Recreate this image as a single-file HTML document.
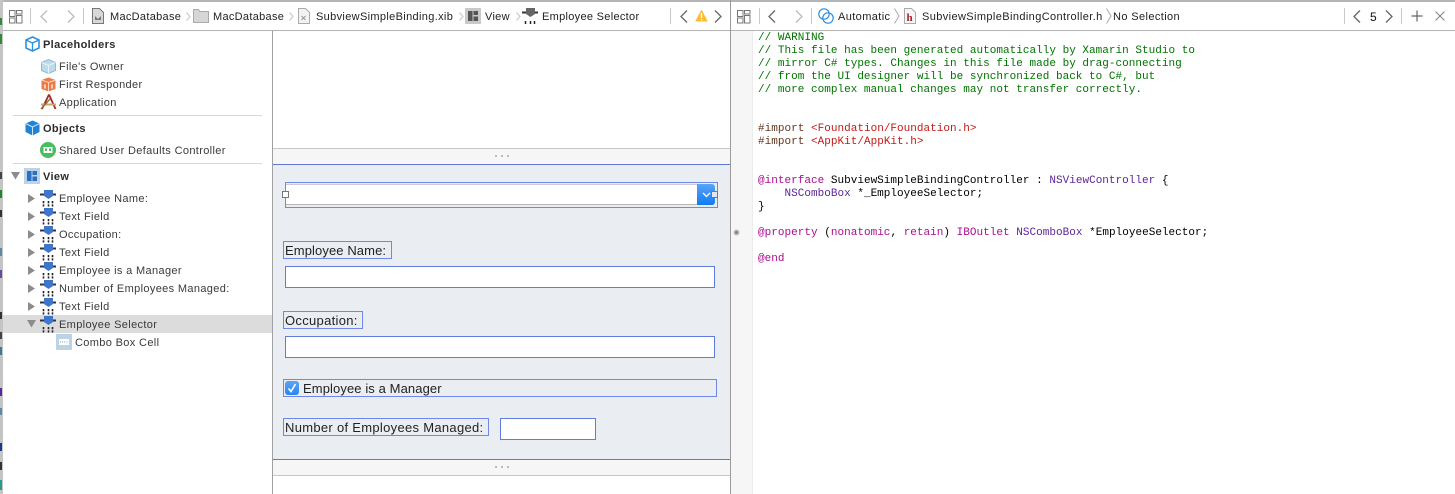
<!DOCTYPE html>
<html><head><meta charset="utf-8">
<style>
html,body{margin:0;padding:0;background:#fff}
#r{position:relative;width:1455px;height:494px;overflow:hidden;background:#fff;font-family:"Liberation Sans",sans-serif;font-size:11px;color:#333}
#r div{position:absolute}
.t{white-space:nowrap;line-height:14px;height:14px;margin-top:1px}
.s{letter-spacing:.35px;color:#3a3a3a}
.b{font-weight:bold;color:#2c2c2c;letter-spacing:.35px}
.h{letter-spacing:.3px;color:#222}
.k{letter-spacing:.39px;color:#222}
.c{font-family:"Liberation Mono",monospace;font-size:11px;line-height:13px;height:13px;white-space:pre;color:#000;left:758px;margin-top:1px;letter-spacing:.02px}
.g{color:#007400}.m{color:#aa0d91}.p{color:#5c2699}.rd{color:#c41a16}
.bx{box-sizing:border-box;border:1px solid #6f87ea}
.f{box-sizing:border-box;border:1px solid #5f7be0;background:#fff}
.l{font-size:13px;line-height:15px;height:15px;white-space:nowrap;color:#222;letter-spacing:.3px}
svg{position:absolute;overflow:visible}
</style></head><body>
<div id="r">
<svg width="0" height="0" style="left:0;top:0">
<defs>
<g id="grid" fill="none" stroke="#777" stroke-width="1"><rect x=".5" y=".5" width="5.5" height="6"/><rect x="7.5" y=".5" width="5.5" height="3.5"/><rect x="7.5" y="5.5" width="5.5" height="7.5"/><rect x=".5" y="8" width="5.5" height="5"/></g>
<g id="emp"><rect x="0" y="3.5" width="16" height="2" fill="#333"/><path d="M4 0h9v6l-4.5 3L4 6z" fill="#3f76cc"/><path d="M3.5 11v5.500M8.500 11v5.500M12.500 11v5.500" stroke="#222" stroke-width="1.600" stroke-dasharray="2.200 1.200" fill="none"/></g>
<path id="tr" d="M0 0l7 4.500L0 9z" fill="#8c8c8c"/>
</defs>
</svg>

<!-- top and frames -->
<div style="left:0;top:0;width:1455px;height:2px;background:#b5b5b5"></div>
<div style="left:0;top:30px;width:1455px;height:1px;background:#b4b4b4"></div>
<div style="left:0;top:0;width:3px;height:494px;background:#c4c4c4"></div>
<div style="left:0;top:18px;width:2px;height:7px;background:#2f8a3a"></div>
<div style="left:0;top:34px;width:2px;height:10px;background:#2f8a3a"></div>
<div style="left:0;top:172px;width:2px;height:7px;background:#444"></div>
<div style="left:0;top:190px;width:2px;height:8px;background:#1a8a2a"></div>
<div style="left:0;top:210px;width:2px;height:7px;background:#333"></div>
<div style="left:0;top:248px;width:2px;height:8px;background:#5a8aa8"></div>
<div style="left:0;top:270px;width:2px;height:8px;background:#6a4aa0"></div>
<div style="left:0;top:312px;width:2px;height:7px;background:#333"></div>
<div style="left:0;top:332px;width:2px;height:7px;background:#444"></div>
<div style="left:0;top:347px;width:2px;height:8px;background:#3a7a9a"></div>
<div style="left:0;top:388px;width:2px;height:8px;background:#5a2a9a"></div>
<div style="left:0;top:408px;width:2px;height:7px;background:#5a8aa8"></div>
<div style="left:0;top:443px;width:2px;height:8px;background:#1a3a8a"></div>
<div style="left:0;top:462px;width:2px;height:8px;background:#333"></div>
<div style="left:0;top:480px;width:2px;height:10px;background:#2a9a8a"></div>

<!-- left toolbar -->
<svg style="left:9px;top:10px" width="14" height="14"><use href="#grid"/></svg>
<div style="left:30px;top:8px;width:1px;height:16px;background:#c8c8c8"></div>
<svg style="left:40px;top:10px" width="8" height="13"><path d="M7 .5L1 6.500l6 6" fill="none" stroke="#bbb" stroke-width="1.300"/></svg>
<svg style="left:67px;top:10px" width="8" height="13"><path d="M1 .5l6 6-6 6" fill="none" stroke="#bbb" stroke-width="1.300"/></svg>
<div style="left:83px;top:8px;width:1px;height:16px;background:#c8c8c8"></div>
<svg style="left:92px;top:8px" width="12" height="16"><path d="M.5.5h7l4 4v11h-11z" fill="#d8d8d8" stroke="#777"/><path d="M3 8l3 3 3-3v4H3z" fill="#777"/></svg>
<div class="t h" style="left:110px;top:9px">MacDatabase</div>
<svg style="left:186px;top:12px" width="5" height="9"><path d="M.5.5l3.500 4-3.500 4" fill="none" stroke="#c4c4c4"/></svg>
<svg style="left:193px;top:9px" width="16" height="14"><path d="M.5 13.500V.5h5l1.500 2h8.500v11z" fill="#d6d6d6" stroke="#aaa"/></svg>
<div class="t h" style="left:213px;top:9px">MacDatabase</div>
<svg style="left:289px;top:12px" width="5" height="9"><path d="M.5.5l3.500 4-3.500 4" fill="none" stroke="#c4c4c4"/></svg>
<svg style="left:298px;top:8px" width="12" height="16"><path d="M.5.5h7l4 4v11h-11z" fill="#f2f2f2" stroke="#aaa"/><path d="M3.500 8l4 4M7.500 8l-4 4" stroke="#999"/></svg>
<div class="t h" style="left:316px;top:9px;letter-spacing:.34px">SubviewSimpleBinding.xib</div>
<svg style="left:459px;top:12px" width="5" height="9"><path d="M.5.5l3.500 4-3.500 4" fill="none" stroke="#c4c4c4"/></svg>
<svg style="left:465px;top:8px" width="16" height="16"><rect width="16" height="16" fill="#c9c9c9"/><rect x="3" y="3" width="4.500" height="10" fill="#555"/><rect x="8.500" y="3" width="4.500" height="4" fill="#555"/><rect x="8.500" y="8.500" width="4.500" height="4.500" fill="#555"/></svg>
<div class="t h" style="left:485px;top:9px">View</div>
<svg style="left:516px;top:12px" width="5" height="9"><path d="M.5.5l3.500 4-3.500 4" fill="none" stroke="#c4c4c4"/></svg>
<svg style="left:522px;top:8px" width="16" height="16"><rect x="0" y="3.500" width="16" height="2" fill="#333"/><path d="M4 0h9v6l-4.500 3L4 6z" fill="#666"/><path d="M3.500 13v3M8.500 13v3M12.500 13v3" stroke="#222" stroke-width="1.500"/></svg>
<div class="t h" style="left:542px;top:9px">Employee Selector</div>
<div style="left:670px;top:8px;width:1px;height:16px;background:#c8c8c8"></div>
<svg style="left:680px;top:10px" width="8" height="13"><path d="M7 .5L1 6.500l6 6" fill="none" stroke="#666" stroke-width="1.300"/></svg>
<svg style="left:695px;top:9px" width="13" height="13"><path d="M6.500.5L12.800 12.500H.2z" fill="#fdbb2f"/><rect x="5.800" y="4" width="1.400" height="5" fill="#fff"/><rect x="5.800" y="10" width="1.400" height="1.400" fill="#fff"/></svg>
<svg style="left:714px;top:10px" width="8" height="13"><path d="M1 .5l6 6-6 6" fill="none" stroke="#666" stroke-width="1.300"/></svg>

<!-- sidebar top -->
<svg style="left:25px;top:36px" width="15" height="16"><path d="M7.500 1L14 4v8l-6.500 3L1 12V4z" fill="#fff" stroke="#2e8fdc" stroke-width="1.600"/><path d="M1 4l6.500 3L14 4M7.500 7v8" fill="none" stroke="#2e8fdc" stroke-width="1.300"/></svg>
<div class="t b" style="left:43px;top:37px">Placeholders</div>
<svg style="left:41px;top:59px" width="15" height="15"><path d="M7.500 .5L14.500 3.500v8l-7 3-7-3v-8z" fill="#bcdcec" stroke="#8fbcd4"/><path d="M.5 3.500l7 3 7-3M7.500 6.500v8" fill="none" stroke="#e8f4fa"/></svg>
<div class="t s" style="left:59px;top:59px">File's Owner</div>
<svg style="left:41px;top:77px" width="15" height="15"><path d="M7.500 .5L14.500 3v9l-7 2.500L.5 12V3z" fill="#ee7a45"/><path d="M.5 3l7 2.500L14.500 3M7.500 5.500v9" fill="none" stroke="#fcd8c4"/><path d="M4 7.500v4M11 7.500v4" stroke="#fff" stroke-width="1.300"/></svg>
<div class="t s" style="left:59px;top:77px">First Responder</div>
<svg style="left:40px;top:94px" width="17" height="16"><path d="M9 .5L15.500 15M9 .5L2 15" fill="none" stroke="#a02a2a" stroke-width="1.800"/><path d="M1 10.500h15" stroke="#c9a860" stroke-width="2"/><path d="M1 15L10 5" stroke="#8a7040" stroke-width="1.400"/></svg>
<div class="t s" style="left:59px;top:95px">Application</div>
<div style="left:13px;top:115px;width:249px;height:1px;background:#d8d8d8"></div>
<svg style="left:25px;top:120px" width="15" height="16"><path d="M7.500 .5L14.500 3.500v8.500l-7 3.500-7-3.500V3.500z" fill="#1f83d6"/><path d="M.5 3.500l7 3.500 7-3.500M7.500 7v8.500" fill="none" stroke="#cfe6f8"/></svg>
<div class="t b" style="left:43px;top:121px">Objects</div>
<svg style="left:40px;top:142px" width="16" height="16"><circle cx="8" cy="8" r="8" fill="#49bd5f"/><rect x="3.500" y="5" width="9" height="6" fill="#fff"/><rect x="5" y="6.500" width="2" height="2.500" fill="#49bd5f"/><rect x="9" y="6.500" width="2" height="2.500" fill="#49bd5f"/></svg>
<div class="t s" style="left:59px;top:143px">Shared User Defaults Controller</div>
<div style="left:13px;top:163px;width:249px;height:1px;background:#d8d8d8"></div>

<!-- outline -->
<svg style="left:11px;top:172px" width="10" height="8"><path d="M0 0h9L4.500 7.500z" fill="#8c8c8c"/></svg>
<svg style="left:24px;top:168px" width="16" height="16"><rect width="16" height="16" fill="#bcd3e6"/><rect x="3" y="3" width="4.500" height="10" fill="#2b6fc4"/><rect x="8.500" y="3" width="4.500" height="4" fill="#2b6fc4"/><rect x="8.500" y="8.500" width="4.500" height="4.500" fill="#2b6fc4"/></svg>
<div class="t b" style="left:43px;top:169px">View</div>

<div style="left:3px;top:315px;width:269px;height:18px;background:#dcdcdc"></div>

<svg style="left:28px;top:194px" width="8" height="10"><use href="#tr"/></svg>
<svg style="left:40px;top:190px" width="16" height="17"><use href="#emp"/></svg>
<div class="t s" style="left:59px;top:191px">Employee Name:</div>
<svg style="left:28px;top:212px" width="8" height="10"><use href="#tr"/></svg>
<svg style="left:40px;top:208px" width="16" height="17"><use href="#emp"/></svg>
<div class="t s" style="left:59px;top:209px">Text Field</div>
<svg style="left:28px;top:230px" width="8" height="10"><use href="#tr"/></svg>
<svg style="left:40px;top:226px" width="16" height="17"><use href="#emp"/></svg>
<div class="t s" style="left:59px;top:227px">Occupation:</div>
<svg style="left:28px;top:248px" width="8" height="10"><use href="#tr"/></svg>
<svg style="left:40px;top:244px" width="16" height="17"><use href="#emp"/></svg>
<div class="t s" style="left:59px;top:245px">Text Field</div>
<svg style="left:28px;top:266px" width="8" height="10"><use href="#tr"/></svg>
<svg style="left:40px;top:262px" width="16" height="17"><use href="#emp"/></svg>
<div class="t s" style="left:59px;top:263px">Employee is a Manager</div>
<svg style="left:28px;top:284px" width="8" height="10"><use href="#tr"/></svg>
<svg style="left:40px;top:280px" width="16" height="17"><use href="#emp"/></svg>
<div class="t s" style="left:59px;top:281px">Number of Employees Managed:</div>
<svg style="left:28px;top:302px" width="8" height="10"><use href="#tr"/></svg>
<svg style="left:40px;top:298px" width="16" height="17"><use href="#emp"/></svg>
<div class="t s" style="left:59px;top:299px">Text Field</div>
<svg style="left:27px;top:320px" width="10" height="8"><path d="M0 0h9L4.500 7.500z" fill="#8c8c8c"/></svg>
<svg style="left:40px;top:316px" width="16" height="17"><use href="#emp"/></svg>
<div class="t s" style="left:59px;top:317px">Employee Selector</div>
<svg style="left:56px;top:334px" width="16" height="16"><rect width="16" height="16" fill="#bcd3e6"/><rect x="3" y="5" width="10" height="6" fill="#fff"/><path d="M4 8h5M10.500 8h2" stroke="#8aa6c0" stroke-dasharray="1 1"/></svg>
<div class="t s" style="left:75px;top:335px">Combo Box Cell</div>

<!-- canvas -->
<div style="left:272px;top:31px;width:1px;height:463px;background:#a0a0a0"></div>
<div style="left:273px;top:148px;width:457px;height:1px;background:#c8c8c8"></div>
<div style="left:273px;top:149px;width:457px;height:15px;background:#f6f6f6"></div>
<div style="left:495px;top:155px;width:2px;height:2px;background:#bbb"></div>
<div style="left:501px;top:155px;width:2px;height:2px;background:#bbb"></div>
<div style="left:507px;top:155px;width:2px;height:2px;background:#bbb"></div>
<div style="left:273px;top:164px;width:457px;height:296px;box-sizing:border-box;background:#eaedf2;border-top:1px solid #6078d8;border-bottom:1px solid #6078d8"></div>
<div style="left:273px;top:460px;width:457px;height:15px;background:#f6f6f6"></div>
<div style="left:495px;top:466px;width:2px;height:2px;background:#bbb"></div>
<div style="left:501px;top:466px;width:2px;height:2px;background:#bbb"></div>
<div style="left:507px;top:466px;width:2px;height:2px;background:#bbb"></div>
<div style="left:273px;top:475px;width:457px;height:1px;background:#c8c8c8"></div>

<!-- combo -->
<div style="left:286px;top:184px;width:411px;height:21px;background:#fff;box-sizing:border-box;border-bottom:1px solid #b5b5b5;border-top:1px solid #ccc"></div>
<div style="left:697px;top:184px;width:18px;height:21px;background:linear-gradient(#5ba3f5,#0f7bf5);border-radius:0 3px 3px 0"></div>
<svg style="left:702px;top:192px" width="9" height="6"><path d="M1 1l3.500 3.500L8 1" fill="none" stroke="#fff" stroke-width="1.300"/></svg>
<div class="bx" style="left:285px;top:182px;width:433px;height:26px"></div>
<div style="left:282px;top:191px;width:7px;height:7px;box-sizing:border-box;background:#fff;border:1px solid #777"></div>
<div style="left:711px;top:191px;width:7px;height:7px;box-sizing:border-box;background:#dfe6f2;border:1px solid #777"></div>

<div class="bx" style="left:283px;top:241px;width:109px;height:18px"></div>
<div class="l" style="left:285px;top:243px;letter-spacing:.1px">Employee Name:</div>
<div class="f" style="left:285px;top:266px;width:430px;height:22px"></div>

<div class="bx" style="left:283px;top:311px;width:80px;height:18px"></div>
<div class="l" style="left:285px;top:313px">Occupation:</div>
<div class="f" style="left:285px;top:336px;width:430px;height:22px"></div>

<div class="bx" style="left:283px;top:379px;width:434px;height:18px"></div>
<div style="left:285px;top:381px;width:14px;height:14px;border-radius:3px;background:linear-gradient(#5ba3f5,#2a86f0)"></div>
<svg style="left:287px;top:383px" width="10" height="10"><path d="M1.500 5.500l2.500 3L8.500 1" fill="none" stroke="#fff" stroke-width="1.600"/></svg>
<div class="l" style="left:303px;top:381px;letter-spacing:.1px">Employee is a Manager</div>

<div class="bx" style="left:283px;top:418px;width:206px;height:18px"></div>
<div class="l" style="left:285px;top:420px">Number of Employees Managed:</div>
<div class="f" style="left:500px;top:418px;width:96px;height:22px"></div>

<!-- right pane -->
<div style="left:730px;top:0;width:1px;height:494px;background:#9a9a9a"></div>
<div style="left:731px;top:31px;width:21px;height:463px;background:#f6f6f6"></div>
<div style="left:752px;top:31px;width:1px;height:463px;background:#ececec"></div>
<svg style="left:733px;top:229px" width="7" height="7"><circle cx="3.500" cy="3.500" r="3.200" fill="#ccc"/><circle cx="3.500" cy="3.500" r="1.800" fill="#888"/></svg>

<svg style="left:737px;top:10px" width="14" height="14"><use href="#grid"/></svg>
<div style="left:759px;top:8px;width:1px;height:16px;background:#c8c8c8"></div>
<svg style="left:768px;top:10px" width="8" height="13"><path d="M7 .5L1 6.500l6 6" fill="none" stroke="#666" stroke-width="1.300"/></svg>
<svg style="left:795px;top:10px" width="8" height="13"><path d="M1 .5l6 6-6 6" fill="none" stroke="#bbb" stroke-width="1.300"/></svg>
<div style="left:811px;top:8px;width:1px;height:16px;background:#c8c8c8"></div>
<svg style="left:818px;top:8px" width="16" height="16"><circle cx="6" cy="6" r="5.200" fill="none" stroke="#2e8fdc" stroke-width="1.200"/><circle cx="10" cy="10" r="5.200" fill="none" stroke="#2e8fdc" stroke-width="1.200"/></svg>
<div class="t k" style="left:838px;top:9px">Automatic</div>
<svg style="left:894px;top:8px" width="6" height="16"><path d="M.5.5L5 8 .5 15.500" fill="none" stroke="#aaa"/></svg>
<svg style="left:904px;top:8px" width="12" height="16"><path d="M.5.5h7l4 4v11h-11z" fill="#f6f6f6" stroke="#aaa"/><text x="2.500" y="13" font-family="Liberation Serif,serif" font-weight="bold" font-size="11" fill="#a0202a">h</text></svg>
<div class="t k" style="left:922px;top:9px">SubviewSimpleBindingController.h</div>
<svg style="left:1106px;top:8px" width="6" height="16"><path d="M.5.5L5 8 .5 15.500" fill="none" stroke="#aaa"/></svg>
<div class="t k" style="left:1113px;top:9px">No Selection</div>
<div style="left:1344px;top:8px;width:1px;height:16px;background:#c8c8c8"></div>
<svg style="left:1353px;top:10px" width="8" height="13"><path d="M7 .5L1 6.500l6 6" fill="none" stroke="#666" stroke-width="1.300"/></svg>
<div class="t" style="left:1370px;top:9px;color:#111;font-size:12px">5</div>
<svg style="left:1385px;top:10px" width="8" height="13"><path d="M1 .5l6 6-6 6" fill="none" stroke="#666" stroke-width="1.300"/></svg>
<div style="left:1401px;top:8px;width:1px;height:16px;background:#c8c8c8"></div>
<svg style="left:1411px;top:10px" width="12" height="12"><path d="M6 .5v11M.5 6h11" stroke="#666" stroke-width="1.200"/></svg>
<svg style="left:1435px;top:11px" width="10" height="10"><path d="M.5.5l9 9M9.500.5l-9 9" stroke="#888" stroke-width="1.100"/></svg>

<!-- code -->
<div class="c g" style="top:31px">// WARNING</div>
<div class="c g" style="top:44px">// This file has been generated automatically by Xamarin Studio to</div>
<div class="c g" style="top:57px">// mirror C# types. Changes in this file made by drag-connecting</div>
<div class="c g" style="top:70px">// from the UI designer will be synchronized back to C#, but</div>
<div class="c g" style="top:83px">// more complex manual changes may not transfer correctly.</div>
<div class="c" style="top:122px"><span style="color:#643820">#import</span> <span class="rd">&lt;Foundation/Foundation.h&gt;</span></div>
<div class="c" style="top:135px"><span style="color:#643820">#import</span> <span class="rd">&lt;AppKit/AppKit.h&gt;</span></div>
<div class="c" style="top:174px"><span class="m">@interface</span> SubviewSimpleBindingController : <span class="p">NSViewController</span> {</div>
<div class="c" style="top:187px">    <span class="p">NSComboBox</span> *_EmployeeSelector;</div>
<div class="c" style="top:200px">}</div>
<div class="c" style="top:226px"><span class="m">@property</span> (<span class="m">nonatomic</span>, <span class="m">retain</span>) <span class="m">IBOutlet</span> <span class="p">NSComboBox</span> *EmployeeSelector;</div>
<div class="c m" style="top:252px">@end</div>
</div>
</body></html>
